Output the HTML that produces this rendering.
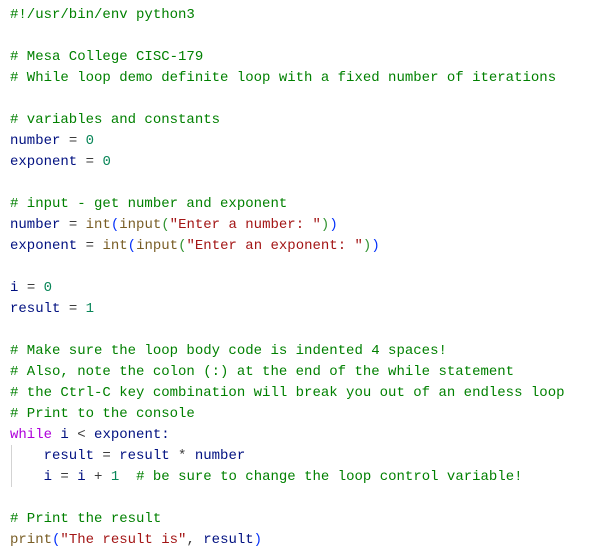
<!DOCTYPE html>
<html><head><meta charset="utf-8"><style>
body{margin:0;background:#fff;width:594px;height:554px;overflow:hidden}
pre{margin:0;padding:5px 0 0 10px;font-family:"Liberation Mono",monospace;font-size:14px;line-height:21px;color:#001080;position:relative}
.c{color:#008000}.k{color:#AF00DB}.n{color:#098658}.s{color:#A31515}.f{color:#795E26}.o{color:#3b3b3b}.b1{color:#0431FA}.b2{color:#319331}
.g{position:absolute;left:11px;top:445px;width:1px;height:42px;background:#d3d3d3}
</style></head><body><pre><span class="g"></span><span class="c">#!/usr/bin/env python3</span>

<span class="c"># Mesa College CISC-179</span>
<span class="c"># While loop demo definite loop with a fixed number of iterations</span>

<span class="c"># variables and constants</span>
number <span class="o">=</span> <span class="n">0</span>
exponent <span class="o">=</span> <span class="n">0</span>

<span class="c"># input - get number and exponent</span>
number <span class="o">=</span> <span class="f">int</span><span class="b1">(</span><span class="f">input</span><span class="b2">(</span><span class="s">"Enter a number: "</span><span class="b2">)</span><span class="b1">)</span>
exponent <span class="o">=</span> <span class="f">int</span><span class="b1">(</span><span class="f">input</span><span class="b2">(</span><span class="s">"Enter an exponent: "</span><span class="b2">)</span><span class="b1">)</span>

i <span class="o">=</span> <span class="n">0</span>
result <span class="o">=</span> <span class="n">1</span>

<span class="c"># Make sure the loop body code is indented 4 spaces!</span>
<span class="c"># Also, note the colon (:) at the end of the while statement</span>
<span class="c"># the Ctrl-C key combination will break you out of an endless loop</span>
<span class="c"># Print to the console</span>
<span class="k">while</span> i <span class="o">&lt;</span> exponent:
    result <span class="o">=</span> result <span class="o">*</span> number
    i <span class="o">=</span> i <span class="o">+</span> <span class="n">1</span>  <span class="c"># be sure to change the loop control variable!</span>

<span class="c"># Print the result</span>
<span class="f">print</span><span class="b1">(</span><span class="s">"The result is"</span><span class="o">,</span> result<span class="b1">)</span>
</pre></body></html>
